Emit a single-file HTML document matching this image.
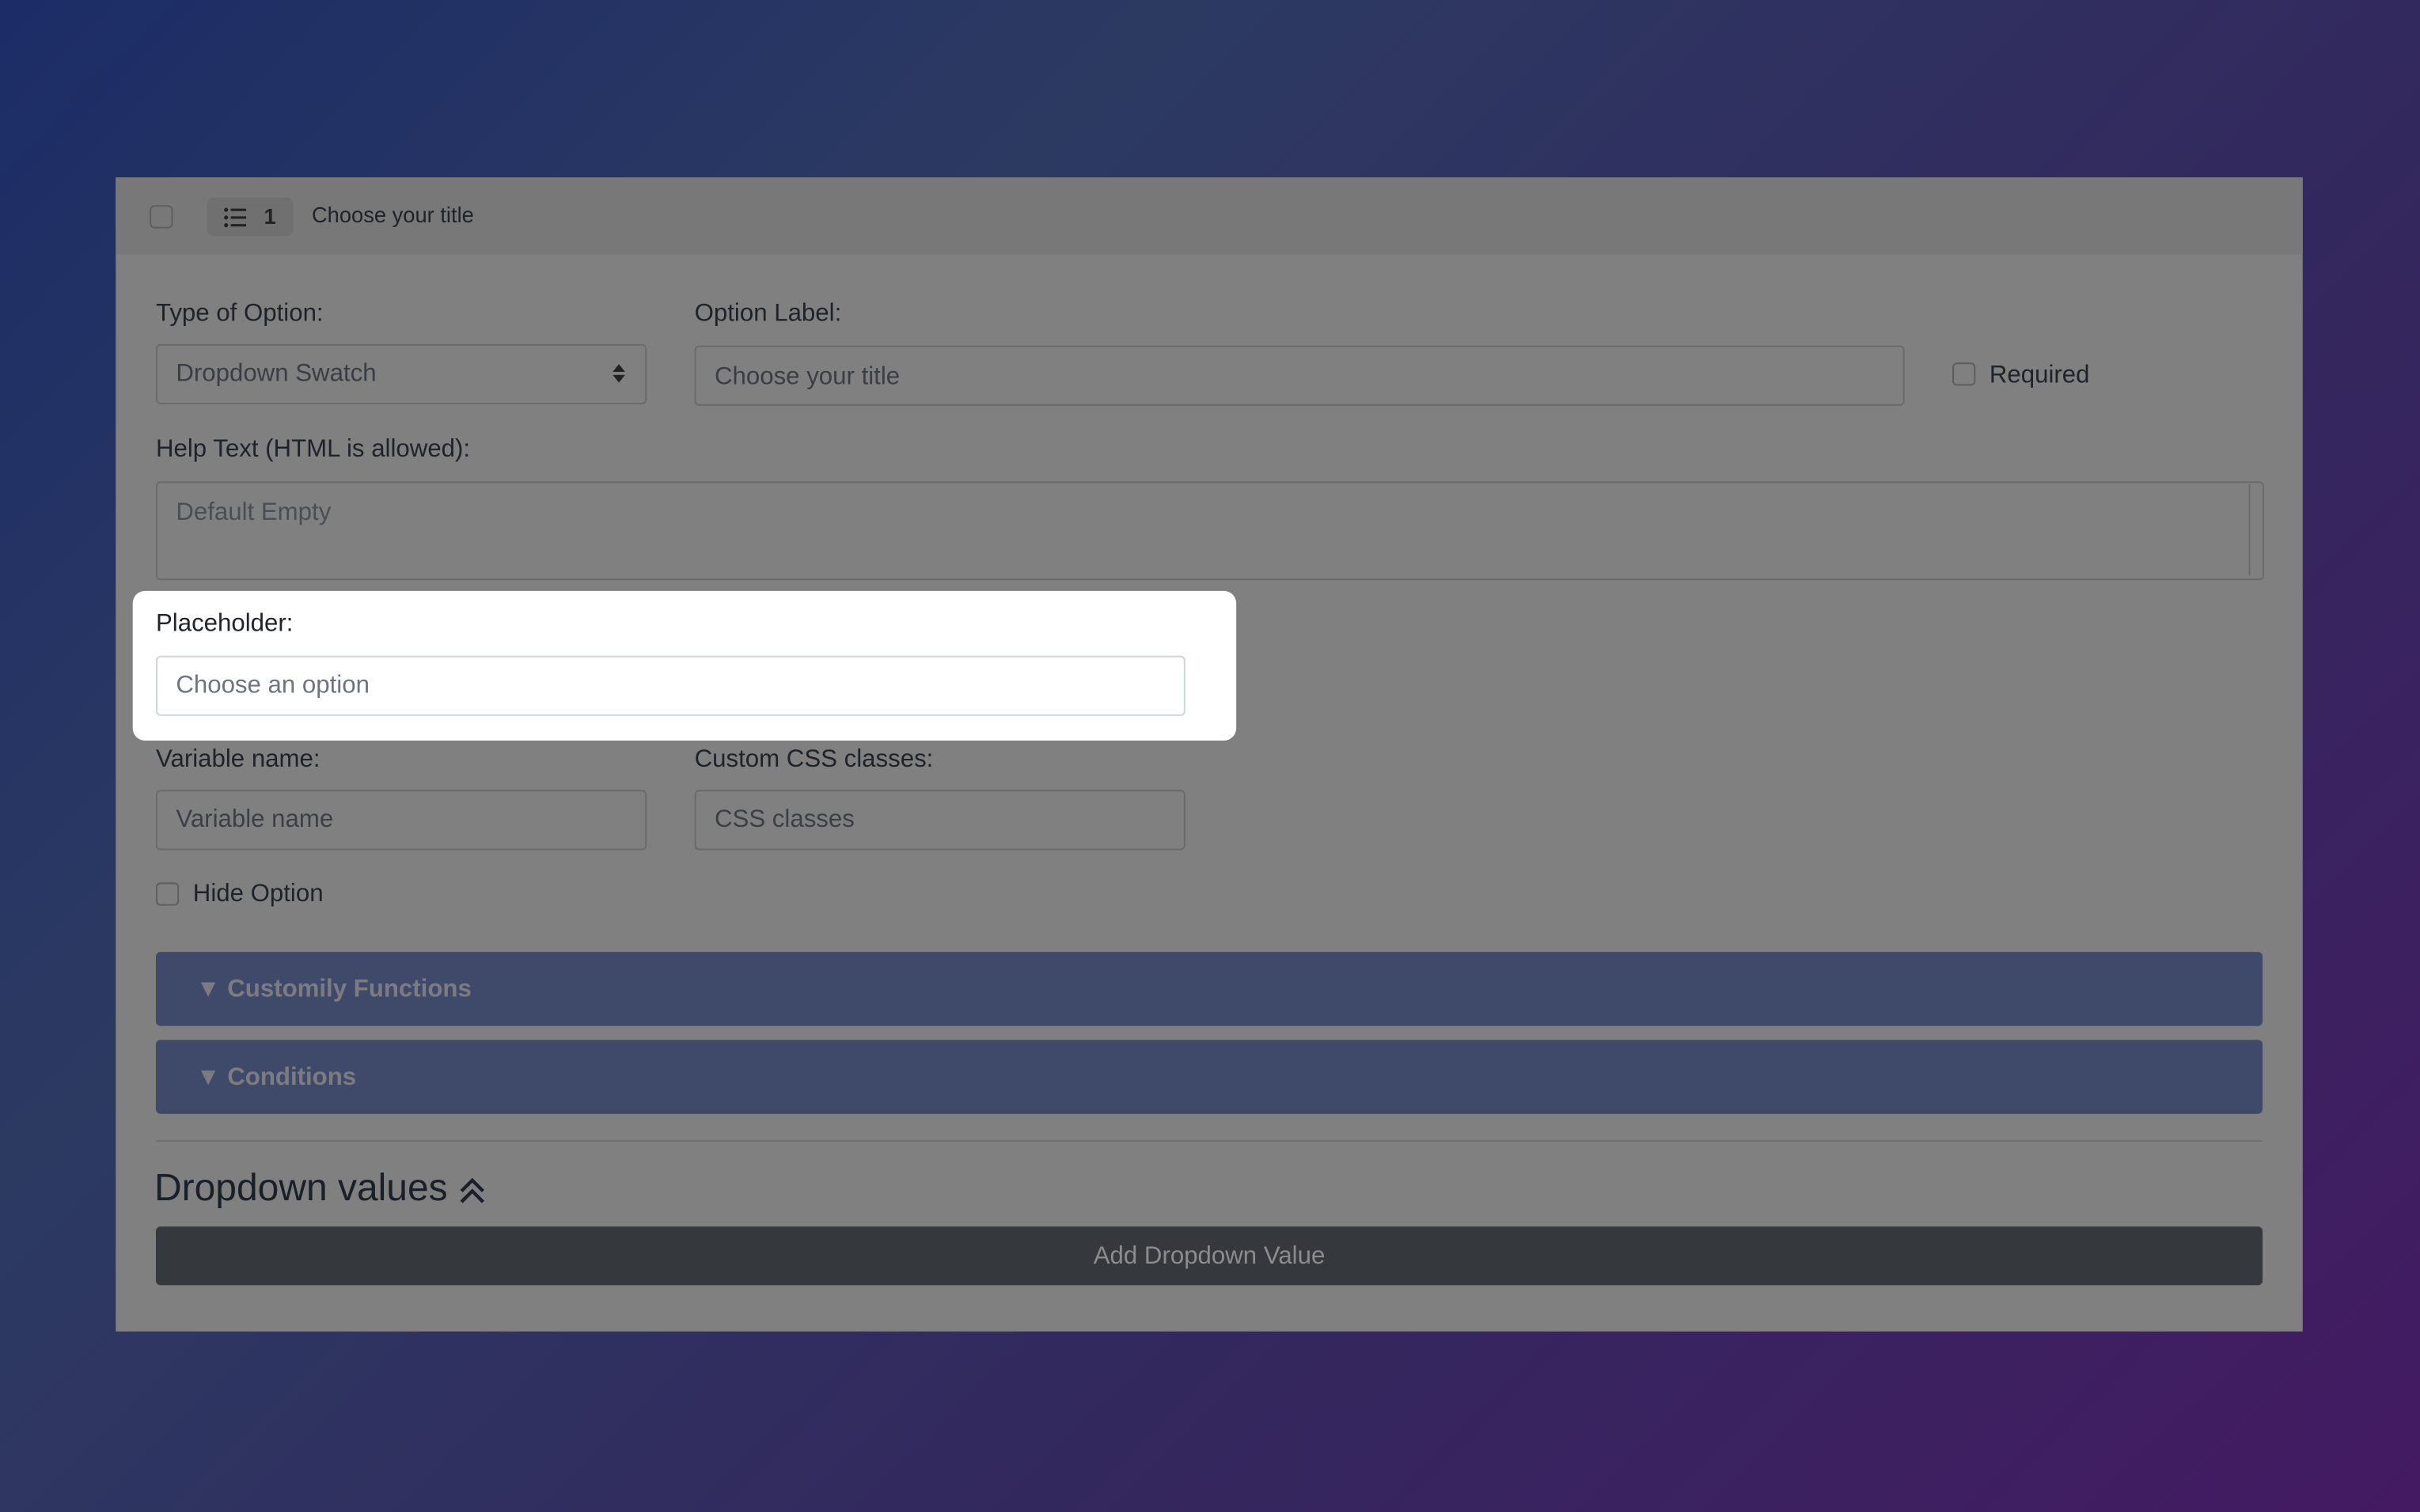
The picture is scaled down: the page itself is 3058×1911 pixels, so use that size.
<!DOCTYPE html>
<html><head><meta charset="utf-8"><style>
html,body{margin:0;padding:0;width:3058px;height:1911px;overflow:hidden}
body{background:linear-gradient(135deg,#1c2c66 0%,#2c3a62 30%,#33285e 65%,#441a62 100%);font-family:"Liberation Sans",sans-serif;}
#w{position:absolute;left:0;top:0;width:1568px;height:980px;transform:scale(1.95026,1.95);transform-origin:0 0}
.a{position:absolute}
.panel{left:75px;top:115px;width:1417px;height:748px;background:#808080}
.hdr{left:75px;top:115px;width:1417px;height:50px;background:#787878}
.cb{border:1px solid #5e5e5e;border-radius:3px;width:14px;height:14px;box-sizing:border-box}
.lbl{font-size:16px;color:#1e232a}
.inp{border:1px solid #6a6a6a;border-radius:3px;box-sizing:border-box;font-size:16px;color:#3a3e44;padding-left:12px;display:flex;align-items:center}
.bar{left:101px;width:1365px;height:48px;background:#3f4a6b;border-radius:3px;color:#7c7c80;font-weight:bold;font-size:16px;display:flex;align-items:center;padding-left:26px;padding-top:2px;box-sizing:border-box}
</style></head><body><div id="w">
<div class="a panel"></div>
<div class="a hdr"></div>
<div class="a cb" style="left:97px;top:133px;width:15px;height:15px"></div>
<div class="a" style="left:134px;top:128px;width:56px;height:25px;background:#707070;border-radius:4px"></div>
<svg class="a" style="left:145px;top:134px" width="15" height="14" viewBox="0 0 15 14"><g fill="#222"><circle cx="1.5" cy="2" r="1.3"/><circle cx="1.5" cy="7" r="1.3"/><circle cx="1.5" cy="12" r="1.3"/><rect x="4.5" y="1.2" width="10" height="1.6"/><rect x="4.5" y="6.2" width="10" height="1.6"/><rect x="4.5" y="11.2" width="10" height="1.6"/></g></svg>
<div class="a" style="left:171px;top:132px;font-size:14px;font-weight:bold;color:#222">1</div>
<div class="a" style="left:202px;top:131px;font-size:14px;color:#1e232a">Choose your title</div>

<div class="a lbl" style="left:101px;top:195px">Type of Option:</div>
<div class="a inp" style="left:101px;top:223px;width:318px;height:39px">Dropdown Swatch</div>
<svg class="a" style="left:397px;top:236px" width="8" height="12" viewBox="0 0 8 12"><path d="M0 5L4 0L8 5Z M0 7L4 12L8 7Z" fill="#222"/></svg>
<div class="a lbl" style="left:450px;top:195px">Option Label:</div>
<div class="a inp" style="left:450px;top:224px;width:784px;height:39px;padding-top:2px">Choose your title</div>
<div class="a cb" style="left:1265px;top:235px;width:15px;height:15px"></div>
<div class="a lbl" style="left:1289px;top:235px">Required</div>

<div class="a lbl" style="left:101px;top:283px">Help Text (HTML is allowed):</div>
<div class="a inp" style="left:101px;top:312px;width:1366px;height:64px;align-items:flex-start;padding-top:11px;color:#4a4e54">Default Empty</div>
<div class="a" style="left:1457px;top:314px;width:7px;height:59px;border-left:1px solid #6a6a6a"></div>

<div class="a" style="left:86px;top:383px;width:715px;height:97px;background:#fff;border-radius:8px"></div>
<div class="a lbl" style="left:101px;top:396px;color:#212529">Placeholder:</div>
<div class="a inp" style="left:101px;top:425px;width:667px;height:39px;border-color:#ced4da;color:#6c757d;padding-top:1px">Choose an option</div>

<div class="a lbl" style="left:101px;top:484px">Variable name:</div>
<div class="a inp" style="left:101px;top:512px;width:318px;height:39px;color:#3c4046;padding-top:1px">Variable name</div>
<div class="a lbl" style="left:450px;top:484px">Custom CSS classes:</div>
<div class="a inp" style="left:450px;top:512px;width:318px;height:39px;color:#3c4046;padding-top:1px">CSS classes</div>

<div class="a cb" style="left:101px;top:572px;width:15px;height:15px"></div>
<div class="a lbl" style="left:125px;top:571px">Hide Option</div>

<div class="a bar" style="top:617px">▼ Customily Functions</div>
<div class="a bar" style="top:674px">▼ Conditions</div>
<div class="a" style="left:101px;top:739px;width:1365px;height:1px;background:#717171"></div>
<div class="a" style="left:100px;top:757px;font-size:24.6px;color:#1a2028">Dropdown values</div>
<svg class="a" style="left:297px;top:763px" width="18" height="18" viewBox="0 0 18 18"><path d="M2 9L9 2L16 9M2 16L9 9L16 16" fill="none" stroke="#1a2028" stroke-width="2.2"/></svg>
<div class="a" style="left:101px;top:795px;width:1365px;height:38px;background:#35383d;border-radius:3px;color:#8c8c8c;font-size:16px;display:flex;align-items:center;justify-content:center;padding-top:2px;box-sizing:border-box">Add Dropdown Value</div>
</div></body></html>
